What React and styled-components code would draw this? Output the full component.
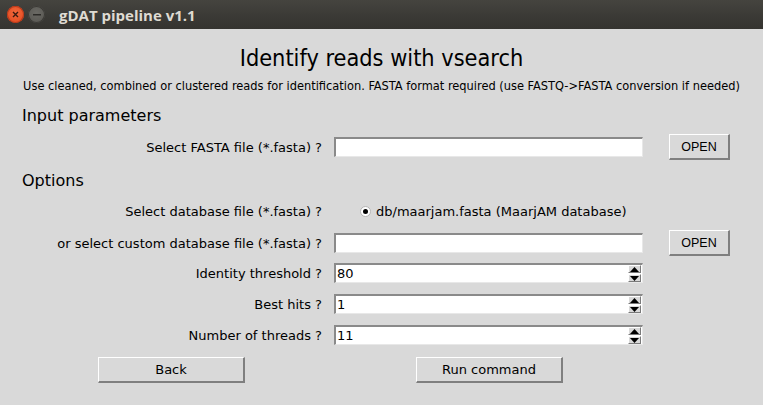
import React from "react";
import styled, { createGlobalStyle } from "styled-components";

const Global = createGlobalStyle`
  html, body { margin: 0; padding: 0; background: #d9d9d9; }
  body { width: 763px; height: 405px; overflow: hidden; font-family: "DejaVu Sans", sans-serif; }
`;

const Window = styled.div`
  width: 763px;
  height: 405px;
  background: #d9d9d9;
  display: flex;
  flex-direction: column;
`;

const TitleBar = styled.div`
  height: 29px;
  flex: none;
  background: linear-gradient(#45443f, #3a3935 60%, #34332f);
  display: flex;
  align-items: center;
  padding-left: 7px;
  gap: 4px;
`;

const WinButton = styled.div`
  width: 17px;
  height: 17px;
  border-radius: 50%;
  display: flex;
  align-items: center;
  justify-content: center;
  background: ${(p) => (p.$close ? "radial-gradient(circle at 50% 40%, #f2683c, #e0461b)" : "radial-gradient(circle at 50% 40%, #6a6964, #55544f)")};
  box-shadow: inset 0 0 0 1px ${(p) => (p.$close ? "#b8391a" : "#3b3a36")};
`;

const TitleText = styled.div`
  margin-left: 10px;
  color: #dfdbd2;
  font-family: "Open Sans", "DejaVu Sans", sans-serif;
  font-weight: 700;
  font-size: 15px;
`;

const Heading = styled.div`
  margin-top: 14px;
  height: 28px;
  display: flex;
  align-items: center;
  justify-content: center;
  font-family: "DejaVu Sans Condensed", "DejaVu Sans", sans-serif;
  font-stretch: condensed;
  font-size: 23.3px;
  color: #000;
`;

const Subtitle = styled.div`
  margin-top: 6px;
  height: 16px;
  display: flex;
  align-items: center;
  justify-content: center;
  font-family: "DejaVu Sans Condensed", "DejaVu Sans", sans-serif;
  font-stretch: condensed;
  font-size: 12.7px;
  color: #000;
  white-space: nowrap;
`;

const Section = styled.div`
  margin-top: ${(p) => p.$mt}px;
  height: 22px;
  display: flex;
  align-items: center;
  padding-left: 22px;
  font-size: 16px;
  color: #000;
`;

const Row = styled.div`
  margin-top: ${(p) => p.$mt}px;
  height: 26px;
  display: flex;
  align-items: center;
`;

const Label = styled.div`
  width: 322px;
  margin-right: 12px;
  text-align: right;
  font-size: 13px;
  color: #000;
  white-space: nowrap;
`;

const Entry = styled.div`
  width: 309px;
  height: 20px;
  box-sizing: border-box;
  background: #fff;
  border-top: 2px solid #8a8a8a;
  border-left: 2px solid #8a8a8a;
  border-bottom: 1px solid #e8e8e8;
  border-right: 1px solid #e8e8e8;
  display: flex;
  align-items: center;
  position: relative;
  font-size: 13px;
  padding-left: 1px;
  color: #000;
`;

const SpinButtons = styled.div`
  position: absolute;
  right: 1px;
  top: 0;
  bottom: 0;
  display: flex;
  flex-direction: column;
  justify-content: center;
  gap: 1px;
`;

const SpinBtn = styled.div`
  width: 11px;
  height: 7px;
  background: #d9d9d9;
  border-top: 1px solid #fff;
  border-left: 1px solid #fff;
  border-bottom: 1px solid #7a7a7a;
  border-right: 1px solid #7a7a7a;
  display: flex;
  align-items: center;
  justify-content: center;
`;

const Button = styled.div`
  width: ${(p) => p.$w}px;
  height: 26px;
  box-sizing: border-box;
  margin-left: ${(p) => p.$ml || 0}px;
  background: #d9d9d9;
  border-top: 1px solid #fff;
  border-left: 1px solid #fff;
  border-bottom: 2px solid #7f7f7f;
  border-right: 2px solid #7f7f7f;
  display: flex;
  align-items: center;
  justify-content: center;
  font-size: 13px;
  color: #000;
`;

const OpenButton = styled(Button)`
  font-family: "Liberation Sans", Arial, sans-serif;
  font-size: 12.5px;
`;

const Radio = styled.div`
  margin-left: 26px;
  display: flex;
  align-items: center;
  font-size: 13px;
  color: #000;
`;

const RadioDot = styled.div`
  width: 9px;
  height: 9px;
  border-radius: 50%;
  background: #fff;
  border: 1px solid #b5b5b5;
  display: flex;
  align-items: center;
  justify-content: center;
  margin-right: 5px;
  &::after {
    content: "";
    width: 5px;
    height: 5px;
    border-radius: 50%;
    background: #000;
  }
`;

const Arrow = ({ up }) => (
  <svg width="9" height="5" viewBox="0 0 9 5">
    <polygon points={up ? "0,5 9,5 4.5,0" : "0,0 9,0 4.5,5"} fill="#000" />
  </svg>
);

const Spin = ({ value }) => (
  <Entry>
    {value}
    <SpinButtons>
      <SpinBtn><Arrow up /></SpinBtn>
      <SpinBtn><Arrow /></SpinBtn>
    </SpinButtons>
  </Entry>
);

export default function App() {
  return (
    <Window>
      <Global />
      <TitleBar>
        <WinButton $close>
          <svg width="7" height="7" viewBox="0 0 7 7">
            <path d="M1 1L6 6M6 1L1 6" stroke="#3a1a10" strokeWidth="1.4" />
          </svg>
        </WinButton>
        <WinButton>
          <svg width="8" height="2" viewBox="0 0 8 2">
            <rect width="8" height="1.5" fill="#2c2b28" />
          </svg>
        </WinButton>
        <TitleText>gDAT pipeline v1.1</TitleText>
      </TitleBar>
      <Heading>Identify reads with vsearch</Heading>
      <Subtitle>
        Use cleaned, combined or clustered reads for identification. FASTA format required (use FASTQ-&gt;FASTA conversion if needed)
      </Subtitle>
      <Section $mt={11}>Input parameters</Section>
      <Row $mt={8}>
        <Label>Select FASTA file (*.fasta) ?</Label>
        <Entry />
        <OpenButton $w={61} $ml={26}>OPEN</OpenButton>
      </Row>
      <Section $mt={9}>Options</Section>
      <Row $mt={7}>
        <Label>Select database file (*.fasta) ?</Label>
        <Radio>
          <RadioDot />
          db/maarjam.fasta (MaarjAM database)
        </Radio>
      </Row>
      <Row $mt={6}>
        <Label>or select custom database file (*.fasta) ?</Label>
        <Entry />
        <OpenButton $w={61} $ml={26}>OPEN</OpenButton>
      </Row>
      <Row $mt={4}>
        <Label>Identity threshold ?</Label>
        <Spin value="80" />
      </Row>
      <Row $mt={5}>
        <Label>Best hits ?</Label>
        <Spin value="1" />
      </Row>
      <Row $mt={5}>
        <Label>Number of threads ?</Label>
        <Spin value="11" />
      </Row>
      <Row $mt={9}>
        <Button $w={147} $ml={98}>Back</Button>
        <Button $w={147} $ml={171}>Run command</Button>
      </Row>
    </Window>
  );
}
